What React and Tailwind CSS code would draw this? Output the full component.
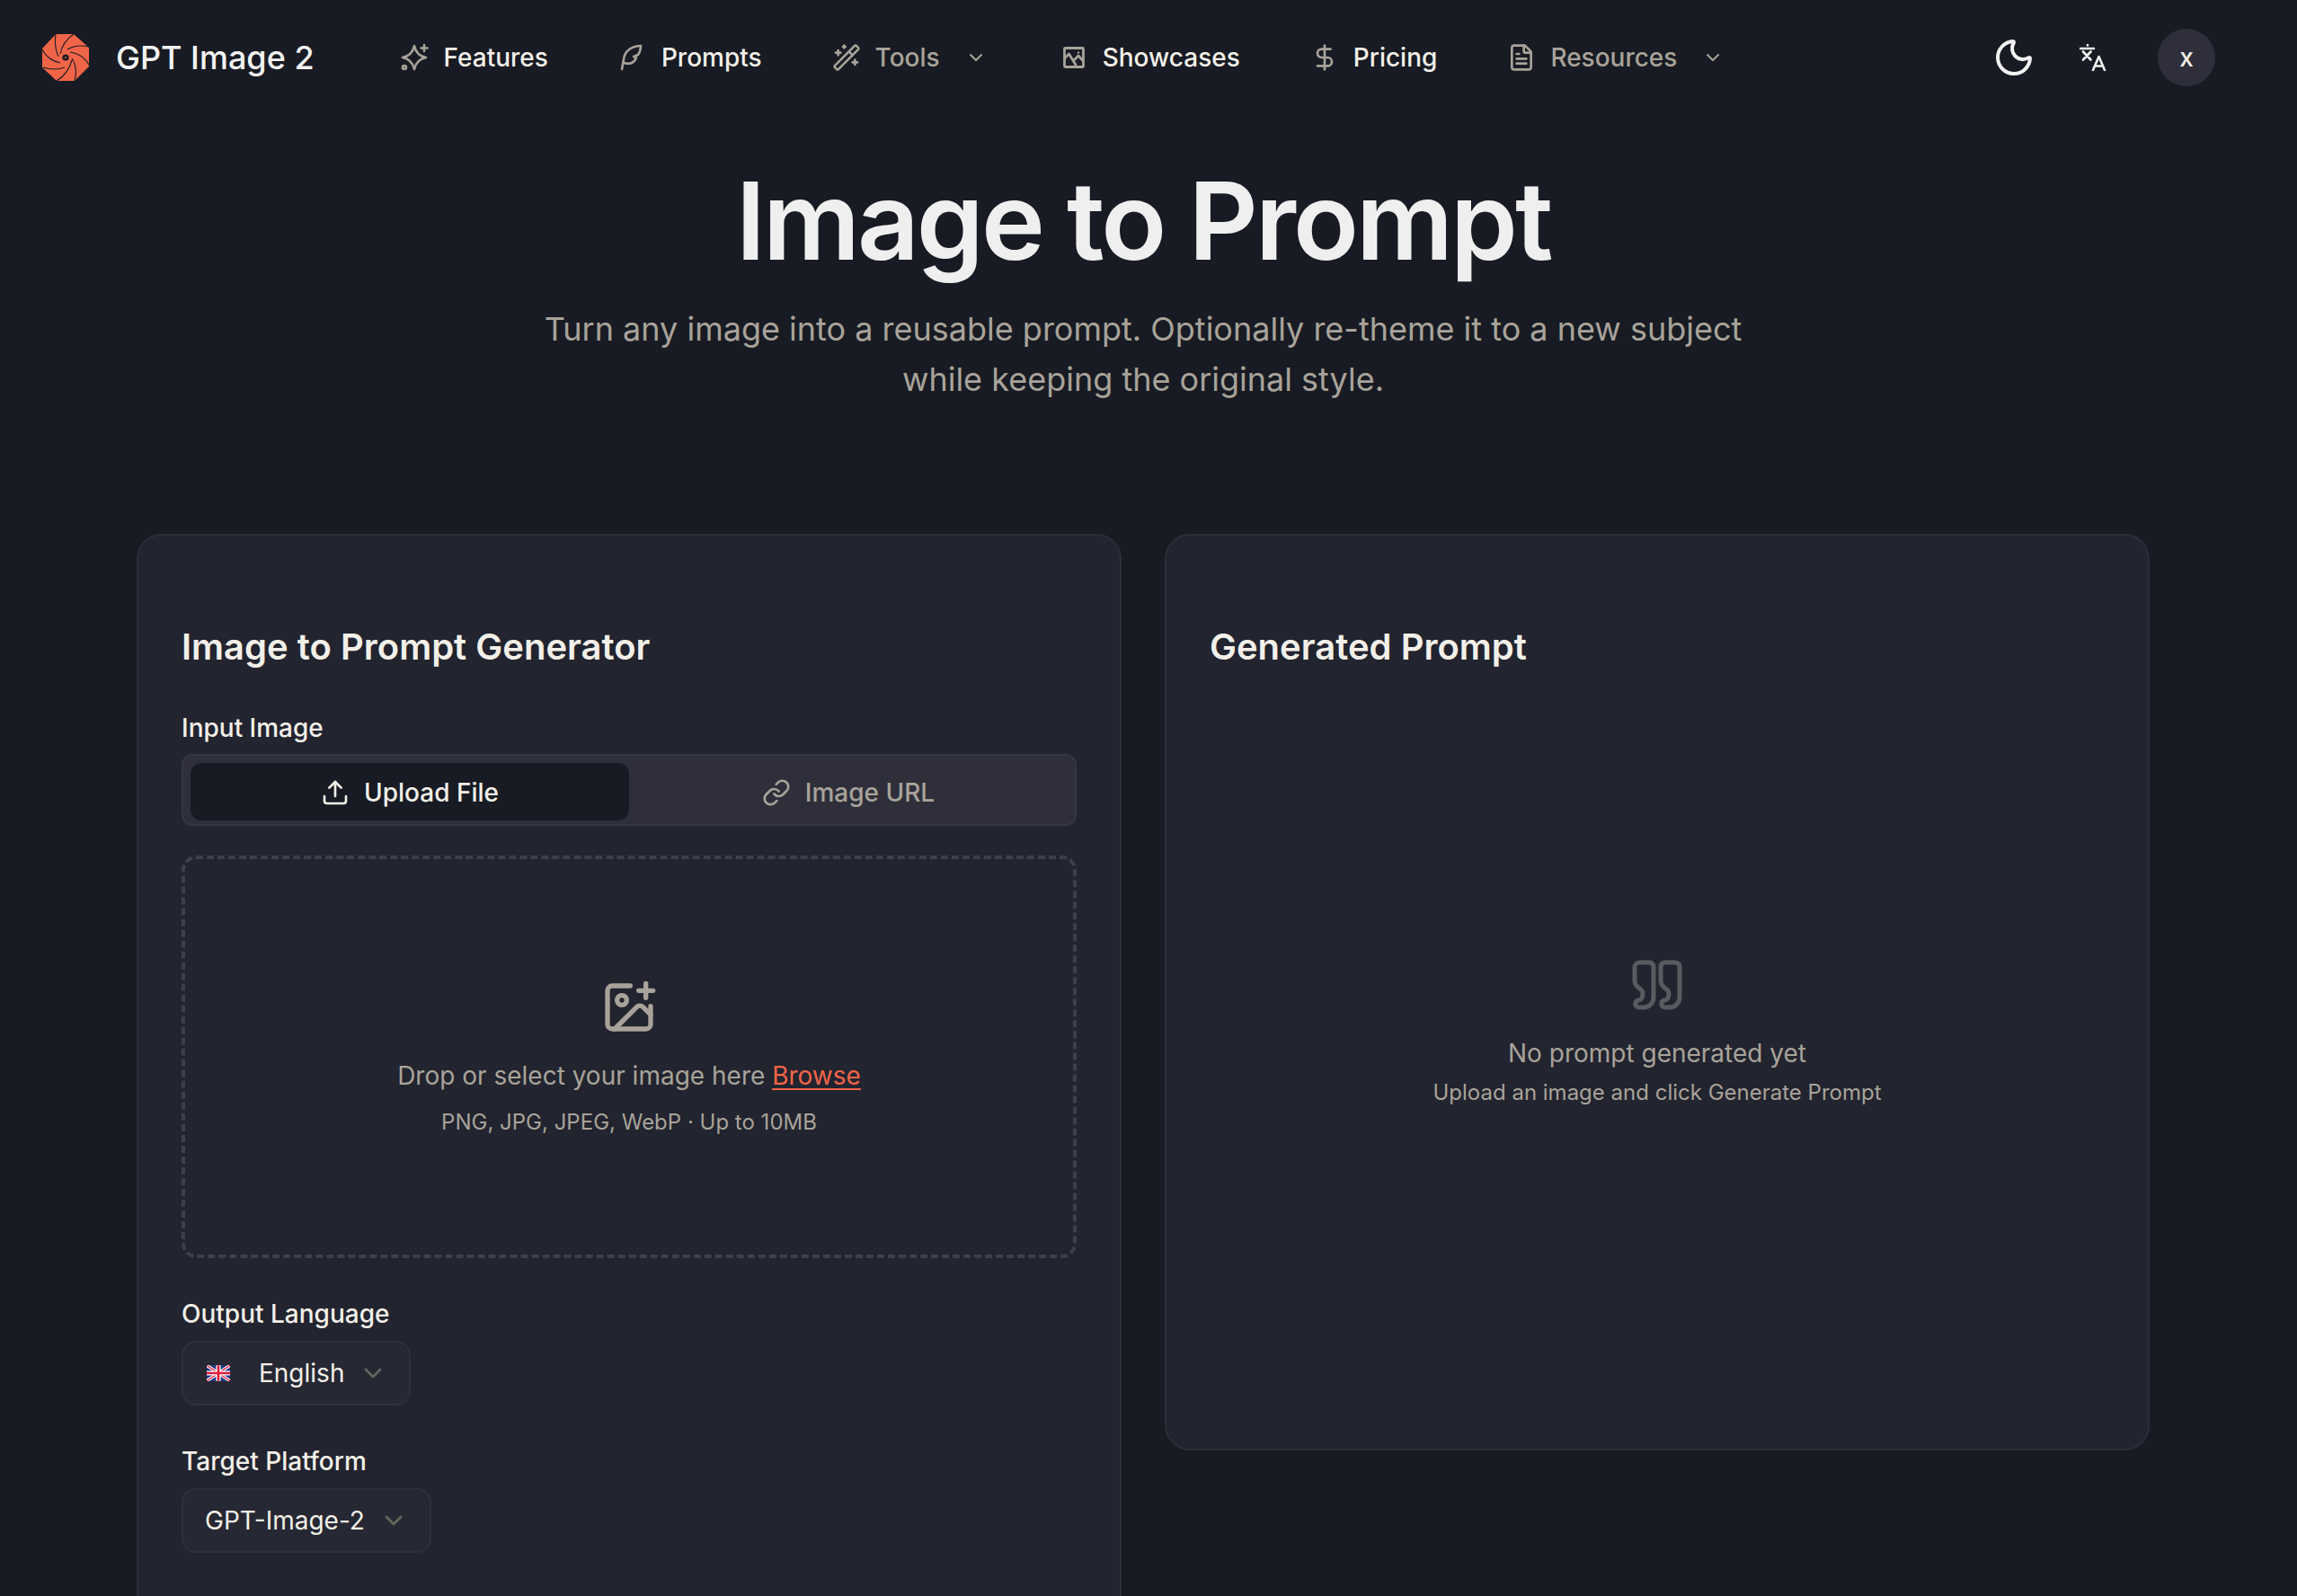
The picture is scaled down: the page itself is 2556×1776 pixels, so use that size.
import { ChevronDown, DollarSign, FileText, ImagePlus, Link, Moon, Upload, WandSparkles } from "lucide-react";

const SparkIcon = () => (
  <svg viewBox="0 0 32 32" fill="none" stroke="currentColor" strokeWidth="2.6" strokeLinecap="round" strokeLinejoin="round" className="h-[32px] w-[32px]">
    <path d="M15 3C16.5 10 20.5 14.5 28 16 20.5 17.500 16.500 22 15 29 13.500 22 9.500 17.500 2 16 9.500 14.500 13.500 10 15 3z" />
    <path d="M26 2v7M22.500 5.500h7" />
    <circle cx="4" cy="27" r="2" />
  </svg>
);

const QuillIcon = () => (
  <svg viewBox="0 0 32 32" fill="none" stroke="currentColor" strokeWidth="2.6" strokeLinecap="round" strokeLinejoin="round" className="h-[32px] w-[32px]">
    <path d="M25 3C16 3 7 8 6 18L4 29" />
    <path d="M6.500 22c6 2 11.500 0 13.500-6l-3-1 5-2c2-3 3-6 3-10" />
  </svg>
);

const PictureIcon = () => (
  <svg viewBox="0 0 32 32" fill="none" stroke="currentColor" strokeWidth="2.8" strokeLinejoin="round" className="h-[32px] w-[32px]">
    <rect x="5.500" y="5.500" width="21" height="21" rx="1" />
    <path d="M5.500 17l5-5 8 13M15 20l6-6 5.500 6" />
    <circle cx="21" cy="10.500" r="1.200" fill="currentColor" stroke="none" />
  </svg>
);

const navItems = [
  { label: "Features", icon: SparkIcon },
  { label: "Prompts", icon: QuillIcon },
  { label: "Tools", icon: WandSparkles, menu: true },
  { label: "Showcases", icon: PictureIcon },
  { label: "Pricing", icon: DollarSign },
  { label: "Resources", icon: FileText, menu: true },
];

const Logo = () => (
  <svg viewBox="0 0 52 52" className="h-[52px] w-[52px]">
    <polygon points="15,0 35,0 52,15 52,36 36,52 16,52 0,37 0,16" fill="#f06548" />
    <g fill="none" stroke="#181b23" strokeWidth="1.1">
      <path d="M15 0Q13 14 18 25" />
      <path d="M35 0Q23 8 20 22" />
      <path d="M52 14Q38 11 28 17" />
      <path d="M52 34Q45 22 31 20" />
      <path d="M36 52Q40 38 33 27" />
      <path d="M16 52Q29 44 33 29" />
      <path d="M1 37Q14 41 25 37" />
      <path d="M0 17Q6 29 20 32" />
    </g>
    <circle cx="26" cy="26" r="3.600" fill="#181b23" />
    <circle cx="26" cy="26" r="1" fill="#f06548" />
  </svg>
);

const TranslateIcon = () => (
  <svg viewBox="0 0 30 30" fill="none" stroke="currentColor" strokeWidth="2.6" strokeLinecap="round" strokeLinejoin="round" className="h-[30px] w-[30px]">
    <path d="M1 5h15M9 1v.5M4 8.500l8.500 9M12.500 8.500l-8.500 9" />
    <path d="M15 29l6.500-15L28 29M17 24.500h9" />
  </svg>
);

const UkFlag = () => (
  <svg viewBox="0 0 60 40" className="ml-[2px] h-[18px] w-[26px]">
    <rect width="60" height="40" fill="#1f3a8a" />
    <path d="M0 0l60 40M60 0L0 40" stroke="#fff" strokeWidth="8" />
    <path d="M0 0l60 40M60 0L0 40" stroke="#e0183a" strokeWidth="3" />
    <path d="M30 0v40M0 20h60" stroke="#fff" strokeWidth="12" />
    <path d="M30 0v40M0 20h60" stroke="#e0183a" strokeWidth="6" />
  </svg>
);

const QuoteIcon = () => (
  <svg viewBox="0 0 56 56" fill="none" stroke="#5a5b60" strokeWidth="5" strokeLinecap="round" strokeLinejoin="round" className="h-[56px] w-[56px]">
    <path d="M9 3h10c3 0 5 2 5 5v34c0 6-5 11-11 11H8c-3 0-5-3-4-5 0-2 2-3 4-3 3-1 4-4 4-8 0-3-2-4-5-6-2-2-4-4-4-7V8c0-3 3-5 6-5z" />
    <path d="M37 3h10c4 0 6 2 6 5v34c0 6-5 11-11 11h-5c-3 0-5-3-4-5 0-2 2-3 4-3 3-1 4-4 4-8 0-3-2-4-5-6-2-2-4-4-4-7V8c0-3 2-5 5-5z" />
  </svg>
);

const Select = ({ children, label }) => (
  <div>
    <div className="text-[28px] leading-[40px] font-medium text-[#f3f0e9]">{label}</div>
    <div className="mt-[10px] inline-flex h-[72px] items-center rounded-[16px] border-2 border-[#2f3039] bg-[#262833] px-[24px] text-[28px] text-[#f3f0e9]">
      {children}
      <ChevronDown size={32} strokeWidth={2} className="ml-[16px] text-[#66665f]" />
    </div>
  </div>
);

export default function App() {
  return (
    <div className="h-[1776px] overflow-hidden bg-[#181b23] font-['Inter',sans-serif] text-[#f3f0e9]">
      <div className="w-[2544px]">
        <header className="flex h-[128px] items-center pl-[47px] pr-[79px]">
          <Logo />
          <span className="ml-[30px] text-[36px] font-medium text-[#f3f3f3]">GPT Image 2</span>
          <nav className="ml-[96px] flex items-center gap-[78px]">
            {navItems.map((item) => {
              const Icon = item.icon;
              return (
                <div key={item.label} className="flex items-center text-[#a8a39a]">
                  <Icon size={32} strokeWidth={2} />
                  <span className={item.menu ? "ml-[16px] text-[28px] font-medium" : "ml-[16px] text-[28px] font-medium text-[#f3f0e9]"}>
                    {item.label}
                  </span>
                  {item.menu && <ChevronDown size={24} strokeWidth={2} className="ml-[28px] mr-[3px]" />}
                </div>
              );
            })}
          </nav>
          <div className="ml-auto flex items-center">
            <Moon size={48} strokeWidth={2} className="text-[#f3f3f3]" />
            <span className="ml-[49px] text-[#f3f3f3]"><TranslateIcon /></span>
            <div className="ml-[57px] flex h-[64px] w-[64px] items-center justify-center rounded-full bg-[#2e2f3a] text-[28px] font-medium">x</div>
          </div>
        </header>

        <section className="flex flex-col items-center">
          <h1 className="mt-[48px] text-[120px] leading-[140px] font-semibold tracking-[-3px] text-[#f0eff0]">Image to Prompt</h1>
          <p className="mt-[22px] w-[1400px] text-center text-[36px] leading-[56px] text-[#a8a39a]">
            Turn any image into a reusable prompt. Optionally re-theme it to a new subject while keeping the original style.
          </p>
        </section>

        <main className="mx-auto mt-[144px] grid w-[2240px] grid-cols-2 items-start gap-[48px]">
          <div className="h-[1300px] rounded-[28px] border-2 border-[#2c2e39] bg-[#22242f] px-[48px] pt-[96px]">
            <h2 className="text-[40px] leading-[56px] font-semibold text-[#f3f0e9]">Image to Prompt Generator</h2>
            <div className="mt-[42px] text-[28px] leading-[40px] font-medium">Input Image</div>
            <div className="mt-[9px] flex h-[80px] items-start rounded-[12px] border-2 border-[#363741] bg-[#2e2f3a] px-[8px] pt-[8px]">
              <div className="flex h-[64px] flex-1 items-center justify-center rounded-[12px] bg-[#181b23] pt-[2px] text-[28px] font-medium">
                <Upload size={32} strokeWidth={2} />
                <span className="ml-[16px]">Upload File</span>
              </div>
              <div className="flex h-[64px] flex-1 items-center justify-center pt-[2px] text-[28px] font-medium text-[#a8a39a]">
                <Link size={32} strokeWidth={2} />
                <span className="ml-[16px]">Image URL</span>
              </div>
            </div>
            <div className="mt-[33px] flex h-[448px] flex-col items-center rounded-[16px] border-4 border-dashed border-[#3e3f48] pt-[133px]">
              <ImagePlus size={64} strokeWidth={2} className="text-[#a8a39a]" />
              <p className="mt-[22px] text-[28px] leading-[44px] text-[#a8a39a]">
                Drop or select your image here <span className="text-[#f06548] underline underline-offset-4">Browse</span>
              </p>
              <p className="mt-[10px] text-[24px] leading-[40px] text-[#a8a39a]">PNG, JPG, JPEG, WebP · Up to 10MB</p>
            </div>
            <div className="mt-[42px]">
              <Select label="Output Language">
                <UkFlag />
                <span className="ml-[32px]">English</span>
              </Select>
            </div>
            <div className="mt-[42px]">
              <Select label="Target Platform">GPT-Image-2</Select>
            </div>
          </div>
          <div className="flex h-[1020px] flex-col rounded-[28px] border-2 border-[#2c2e39] bg-[#22242f] px-[48px] pt-[96px]">
            <h2 className="text-[40px] leading-[56px] font-semibold">Generated Prompt</h2>
            <div className="flex flex-1 flex-col items-center pt-[320px]">
              <QuoteIcon />
              <p className="mt-[26px] text-[28px] leading-[44px] text-[#a8a39a]">No prompt generated yet</p>
              <p className="mt-[2px] text-[24px] leading-[40px] text-[#a8a39a]">Upload an image and click Generate Prompt</p>
            </div>
          </div>
        </main>
      </div>
    </div>
  );
}
